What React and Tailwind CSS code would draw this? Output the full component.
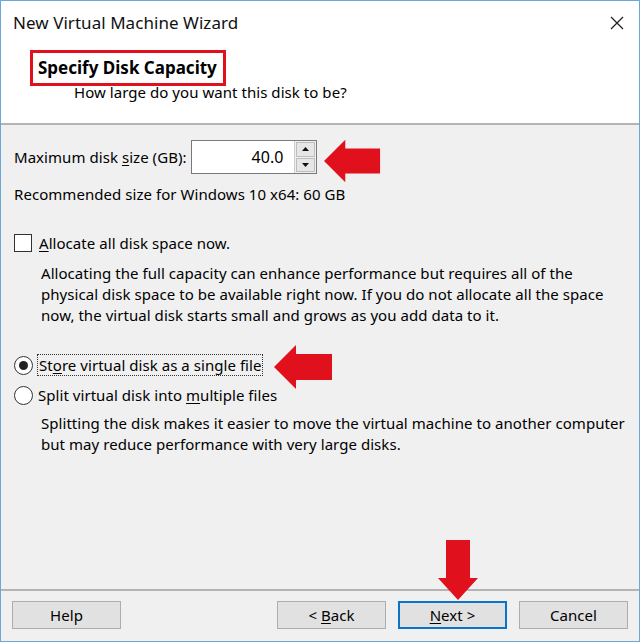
import React from 'react';

// --- VMware "New Virtual Machine Wizard" disk capacity page, 640×642 ---

const font = { fontFamily: '"Noto Sans", "Open Sans", sans-serif' };

const LeftArrow = ({ className }) => (
  <svg className={className} viewBox="0 0 60 44" fill="#e0101c">
    <path d="M0 22 L22 0 L22 9 L58 9 L58 35 L22 35 L22 44 Z" />
  </svg>
);

const DownArrow = ({ className }) => (
  <svg className={className} viewBox="0 0 40 60" fill="#e0101c">
    <path d="M20 60 L0 38 L8 38 L8 0 L32 0 L32 38 L40 38 Z" />
  </svg>
);

const U = ({ children }) => <span className="underline underline-offset-2">{children}</span>;

function Button({ children, primary }) {
  return (
    <button
      className={
        'w-[109px] h-[28px] bg-[#e1e1e1] text-[15px] text-black flex items-center justify-center ' +
        (primary ? 'border-2 border-[#0a74c9]' : 'border border-[#adadad]')
      }
    >
      <span>{children}</span>
    </button>
  );
}

export default function App() {
  return (
    <div className="relative w-[640px] h-[642px] flex flex-col bg-[#f0f0f0] border border-[#6da7d6] text-black overflow-hidden tracking-[0.05px]" style={font}>
      {/* header */}
      <div className="bg-white h-[124px] border-b-2 border-[#b4b4b4] flex flex-col shrink-0">
        <div className="flex items-center justify-between h-[44px] pl-[12px] pr-[14px]">
          <span className="text-[17px] text-[#111]">New Virtual Machine Wizard</span>
          <svg className="w-[16px] h-[16px]" viewBox="0 0 16 16" stroke="#222" strokeWidth="1.3">
            <path d="M2 2 L14 14 M14 2 L2 14" />
          </svg>
        </div>
        <div className="ml-[29px] mt-[5px] w-fit border-[3px] border-[#e0101c] pl-[5px] pr-[6px] h-[36px] flex items-center">
          <span className="text-[17px] font-bold tracking-[0px]">Specify Disk Capacity</span>
        </div>
        <div className="ml-[73px] mt-[-5px] text-[15px] leading-[22px]">How large do you want this disk to be?</div>
      </div>

      {/* body */}
      <div className="flex-1 flex flex-col px-[13px] pt-[15px] text-[15px]">
        <div className="flex items-center gap-[4px] h-[34px]">
          <span>Maximum disk <U>s</U>ize (GB):</span>
          <div className="flex border border-[#7a7a7a] bg-white h-[34px]">
            <div className="w-[102px] flex items-center justify-end pr-[10px] text-[16px]">40.0</div>
            <div className="w-[22px] flex flex-col gap-[1px] p-[1px] bg-[#f0f0f0] border-l border-[#ccc]">
              <div className="flex-1 bg-[#e6e6e6] border border-[#bdbdbd] flex items-center justify-center">
                <svg width="7" height="4" viewBox="0 0 7 4"><path d="M0 4 L3.5 0 L7 4 Z" fill="#111" /></svg>
              </div>
              <div className="flex-1 bg-[#e6e6e6] border border-[#bdbdbd] flex items-center justify-center">
                <svg width="7" height="4" viewBox="0 0 7 4"><path d="M0 0 L3.5 4 L7 0 Z" fill="#111" /></svg>
              </div>
            </div>
          </div>
        </div>
        <div className="mt-[9px] leading-[22px]">Recommended size for Windows 10 x64: 60 GB</div>

        <div className="flex items-center gap-[7px] mt-[28px] h-[20px]">
          <div className="w-[18px] h-[18px] border border-[#333] bg-white" />
          <span><U>A</U>llocate all disk space now.</span>
        </div>
        <div className="ml-[27px] mt-[10px] leading-[21px] w-[590px]">
          Allocating the full capacity can enhance performance but requires all of the<br />
          physical disk space to be available right now. If you do not allocate all the space<br />
          now, the virtual disk starts small and grows as you add data to it.
        </div>

        <div className="flex items-center gap-[4px] mt-[28px] h-[22px]">
          <div className="w-[19px] h-[19px] rounded-full border border-[#333] bg-white flex items-center justify-center">
            <div className="w-[9px] h-[9px] rounded-full bg-[#222]" />
          </div>
          <span className="border border-dotted border-[#333] px-[1px] leading-[20px]">
            St<U>o</U>re virtual disk as a single file
          </span>
        </div>
        <div className="flex items-center gap-[5px] mt-[8px] h-[22px]">
          <div className="w-[19px] h-[19px] rounded-full border border-[#333] bg-white" />
          <span>Split virtual disk into <U>m</U>ultiple files</span>
        </div>
        <div className="ml-[27px] mt-[7px] leading-[21px] w-[595px]">
          Splitting the disk makes it easier to move the virtual machine to another computer<br />
          but may reduce performance with very large disks.
        </div>
      </div>

      {/* footer */}
      <div className="border-t-2 border-[#b4b4b4] h-[52px] shrink-0 flex items-center px-[11px] pb-[2px]">
        <Button>Help</Button>
        <div className="flex-1" />
        <div className="flex gap-[12px]">
          <Button>&lt; <U>B</U>ack</Button>
          <Button primary><U>N</U>ext &gt;</Button>
          <Button>Cancel</Button>
        </div>
      </div>

      {/* red annotation arrows */}
      <LeftArrow className="absolute left-[323px] top-[138px] w-[58px] h-[44px]" />
      <LeftArrow className="absolute left-[267px] top-[344px] w-[72px] h-[44px]" />
      <DownArrow className="absolute left-[437px] top-[539px] w-[40px] h-[60px]" />
    </div>
  );
}
